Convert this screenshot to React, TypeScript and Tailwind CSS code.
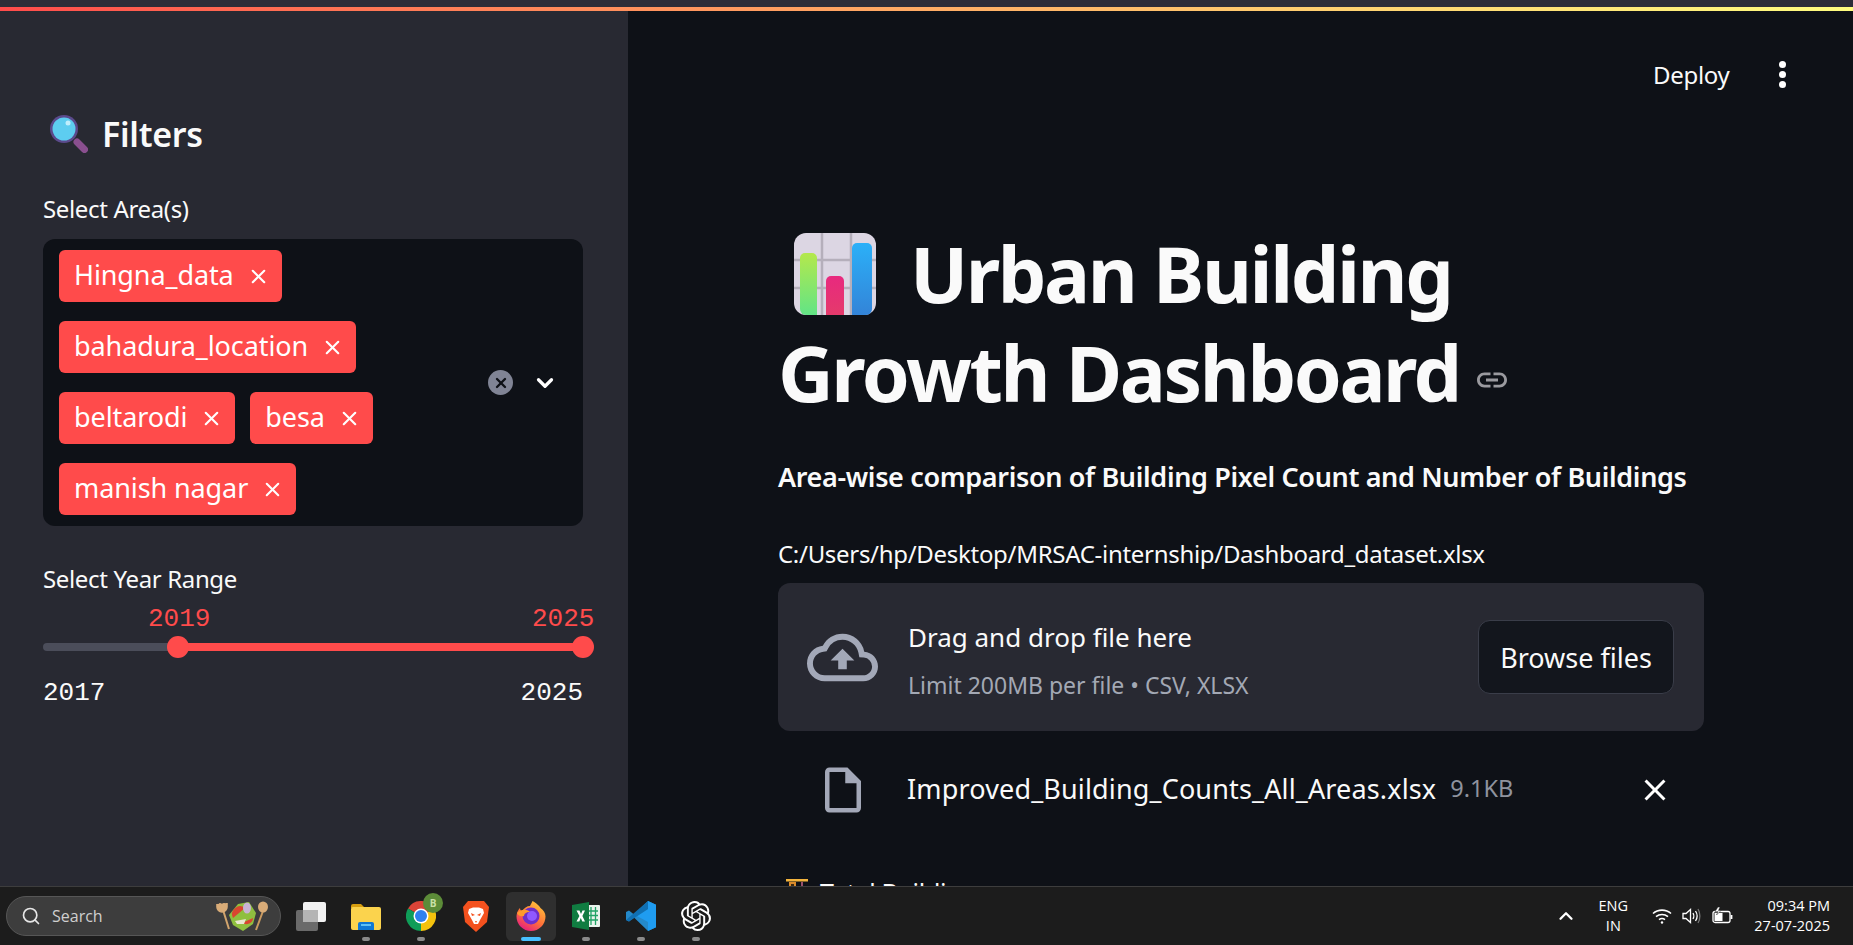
import { ChevronDown, ChevronUp, Search, X } from 'lucide-react';
import { MdClose, MdLink, MdOutlineCloudUpload, MdOutlineInsertDriveFile } from 'react-icons/md';
import { SiOpenai } from 'react-icons/si';

const areas = ['Hingna_data', 'bahadura_location', 'beltarodi', 'besa', 'manish nagar'];

const MagnifierEmoji = () => (
  <svg viewBox="0 0 38 38" className="h-[38px] w-[38px] shrink-0">
    <path d="M27 27L34.500 34.500" stroke="#8a4f8f" strokeWidth="7" strokeLinecap="round" />
    <circle cx="14" cy="14" r="14" fill="#5b4a8c" />
    <circle cx="14" cy="14" r="11.5" fill="#5dcdf0" />
    <circle cx="18" cy="8" r="2.5" fill="#bfeefc" />
  </svg>
);

const ChartEmoji = () => (
  <svg viewBox="0 0 82 82" className="h-[82px] w-[82px] shrink-0">
    <defs>
      <linearGradient id="g1" x1="0" y1="0" x2="0" y2="1">
        <stop offset="0" stopColor="#b4e84c" />
        <stop offset="1" stopColor="#62e486" />
      </linearGradient>
      <linearGradient id="g2" x1="0" y1="0" x2="0" y2="1">
        <stop offset="0" stopColor="#e8297f" />
        <stop offset="1" stopColor="#e53a6b" />
      </linearGradient>
      <linearGradient id="g3" x1="0" y1="0" x2="0" y2="1">
        <stop offset="0" stopColor="#2bb0f8" />
        <stop offset="1" stopColor="#3384d8" />
      </linearGradient>
    </defs>
    <rect width="82" height="82" rx="12" fill="#dcd6e3" />
    <path d="M28 0V82M57 0V82M0 27H82M0 55H82" stroke="#b5afbb" strokeWidth="2.5" />
    <path d="M6 76V25a5 5 0 0 1 5-5h7a5 5 0 0 1 5 5V82H12a6 6 0 0 1-6-6z" fill="url(#g1)" />
    <path d="M32 82V48a5 5 0 0 1 5-5h8a5 5 0 0 1 5 5V82z" fill="url(#g2)" />
    <path d="M58 82V15a5 5 0 0 1 5-5h10a5 5 0 0 1 5 5V76a6 6 0 0 1-6 6z" fill="url(#g3)" />
  </svg>
);

const SaladDoodle = () => (
  <svg viewBox="0 0 54 30" className="h-[30px] w-[54px]">
    <path d="M7 9L13 28" stroke="#d2a56d" strokeWidth="2" />
    <path d="M1 3V6a5 5 0 0 0 10 0V2M4 2V6M8 2V6" stroke="#d9ac78" strokeWidth="1.600" fill="#d9ac78" />
    <path d="M47 10L40 29" stroke="#c99a60" strokeWidth="2" />
    <ellipse cx="47" cy="6" rx="5" ry="5.500" fill="#d9ac78" />
    <path d="M13 14L22 3L33 1L40 12L37 23L27 30L17 24z" fill="#8fbf3f" />
    <path d="M17 17a8 8 0 0 1 12-10z" fill="#d9452f" />
    <path d="M26 22a7 6 0 0 0 11-5z" fill="#d9452f" />
    <ellipse cx="31" cy="7" rx="4" ry="5.500" fill="#c9b3d4" />
    <path d="M19 20L30 18L28 23L21 23z" fill="#e9e6d0" />
  </svg>
);

const CraneEmoji = () => (
  <svg viewBox="0 0 24 24" className="h-[24px] w-[24px] shrink-0">
    <rect x="1" y="0" width="22" height="2.500" fill="#f2b33d" />
    <rect x="4" y="3" width="7" height="21" fill="#d98a2b" />
    <rect x="6" y="5" width="3" height="3" fill="#3b2a12" />
    <path d="M17 3V8" stroke="#c7668a" strokeWidth="1.500" />
    <path d="M15 10H19" stroke="#8a8a8a" strokeWidth="2" />
  </svg>
);

const TaskView = () => (
  <svg viewBox="0 0 30 29" className="h-[29px] w-[30px]">
    <rect x="0" y="8" width="22" height="21" rx="2" fill="#6a6a6a" />
    <rect x="7" y="0" width="23" height="20" rx="2" fill="#f2f2f2" />
    <rect x="7" y="8" width="15" height="12" fill="#b4b4b4" />
  </svg>
);

const FolderIcon = () => (
  <svg viewBox="0 0 30 27" className="h-[27px] w-[30px]">
    <path d="M0 3a2 2 0 0 1 2-2h8l4 4H0z" fill="#d79e0f" />
    <rect x="0" y="4" width="30" height="23" rx="2" fill="#fbd34d" />
    <path d="M7 27v-6a2 2 0 0 1 2-2h12a2 2 0 0 1 2 2v6z" fill="#0f78d4" />
    <rect x="10" y="21" width="10" height="2" fill="#5fc1f5" />
  </svg>
);

const ChromeIcon = () => (
  <svg viewBox="0 0 30 30" className="h-[30px] w-[30px]">
    <path d="M15 15L2 7.5A15 15 0 0 1 28 7.5z" fill="#db4437" />
    <path d="M15 15L28 7.5A15 15 0 0 1 15 30z" fill="#f4c20d" />
    <path d="M15 15L15 30A15 15 0 0 1 2 7.5z" fill="#0f9d58" />
    <circle cx="15" cy="15" r="7.5" fill="#fff" />
    <circle cx="15" cy="15" r="6" fill="#2f80ed" />
  </svg>
);

const BraveIcon = () => (
  <svg viewBox="0 0 26 31" className="h-[31px] w-[26px]">
    <path d="M5 0H21L26 6L24 21L13 31L2 21L0 6z" fill="#f4511e" />
    <path d="M6 8L10 6.5H16L20 8L21 12L17 19L15 23H11L9 19L5 12z" fill="#fff" />
    <path d="M8 12L12 14L9 15zM18 12L14 14L17 15zM12 20H14L13 22z" fill="#f4511e" />
  </svg>
);

const FirefoxIcon = () => (
  <svg viewBox="0 0 30 30" className="h-[30px] w-[30px]">
    <defs>
      <linearGradient id="ff1" x1="0.8" y1="0" x2="0.2" y2="1">
        <stop offset="0" stopColor="#ffc93a" />
        <stop offset="0.55" stopColor="#ff7139" />
        <stop offset="1" stopColor="#e31587" />
      </linearGradient>
    </defs>
    <path d="M15 30A14.5 14.5 0 0 1 .5 15.5C.5 11 3 8 4 7c0 2 1 3 2 3 2-3 5-5 8-5C15 3 16 1 16.500 0c5 3 7 5 8 7 3 2 5 5 5 8.500A14.500 14.500 0 0 1 15 30z" fill="url(#ff1)" />
    <circle cx="15" cy="15" r="8.500" fill="#6e2fc9" />
    <circle cx="16" cy="15" r="5" fill="#9059ff" />
    <path d="M1 12C5 8 11 8 14 11C10 11 8 13 8 15C4 16 2 14 1 12z" fill="#ff9a2e" />
  </svg>
);

const ExcelIcon = () => (
  <svg viewBox="0 0 28 28" className="h-[28px] w-[28px]">
    <rect x="13" y="3" width="15" height="22" rx="1" fill="#e9f3ec" />
    <path d="M19 5V23M23.500 5V23M15 9H26M15 13.500H26M15 18H26" stroke="#21a366" strokeWidth="1.300" />
    <path d="M0 3L17 0V28L0 25z" fill="#107c41" />
    <path d="M4.500 8.500H7.500L9 12L10.500 8.500H13L10.400 14L13 19.500H10.300L8.800 16L7.300 19.500H4.500L7.400 14z" fill="#fff" />
  </svg>
);

const VsCodeIcon = () => (
  <svg viewBox="0 0 30 30" className="h-[30px] w-[30px]">
    <path d="M22 0L30 3.800V26.200L22 30L8 16.500L3 20.500L0 19V11L3 9.500L8 13.500z" fill="#2489ca" />
    <path d="M22 0L30 3.800V26.200L22 30V21L11 15L22 8z" fill="#1f9cf0" />
    <path d="M0 19L22 0V8L3 20.500z" fill="#1070b3" />
  </svg>
);

const WifiIcon = () => (
  <svg viewBox="0 0 20 16" className="h-4 w-5" fill="none" stroke="#fff" strokeWidth="1.600">
    <path d="M1 5.500C6 1 14 1 19 5.500M4 8.700C7.500 5.700 12.500 5.700 16 8.700M7 11.700C8.800 10.300 11.200 10.300 13 11.700" />
    <circle cx="10" cy="14.500" r="1.200" fill="#fff" stroke="none" />
  </svg>
);

const VolumeIcon = () => (
  <svg viewBox="0 0 20 16" className="h-4 w-5" fill="none" stroke="#fff" strokeWidth="1.300">
    <path d="M1 5.500H4L8.500 1.500V14.500L4 10.500H1z" />
    <path d="M11 5C12 6.500 12 9.500 11 11M13.500 3C15.500 6 15.500 10 13.500 13" />
    <path d="M16 1C18.500 5 18.500 11 16 15" stroke="#777" />
  </svg>
);

const BatteryIcon = () => (
  <svg viewBox="0 0 22 18" className="h-[18px] w-[22px]" fill="none" stroke="#fff" strokeWidth="1.300">
    <rect x="1" y="4.500" width="17" height="11" rx="2" />
    <rect x="2.500" y="6" width="8" height="8" fill="#fff" stroke="none" />
    <path d="M19.500 8V12" strokeWidth="1.800" />
    <path d="M6 0L3 4.500H6L4.500 8L9 3.500H6.500L8 0z" fill="#fff" stroke="#1c1c1c" strokeWidth="0.500" />
  </svg>
);

const TaskSlot = ({ children, dot, active }: { children: React.ReactNode; dot?: boolean; active?: boolean }) => (
  <div className="relative flex h-[59px] w-[55px] items-center justify-center">
    {active && <div className="absolute top-[5px] left-[2.500px] h-[49px] w-[50px] rounded-md bg-[#2f2f2f]" />}
    <div className="relative flex items-center justify-center">{children}</div>
    {dot && <div className="absolute top-[50px] left-[23.500px] h-[4px] w-[8px] rounded-full bg-[#8a8a8a]" />}
    {active && <div className="absolute top-[50px] left-[17.500px] h-[4px] w-[20px] rounded-full bg-[#47c0ff]" />}
  </div>
);

const Sidebar = () => (
  <aside className="flex w-[628px] shrink-0 flex-col bg-[#282932] pt-[103px] pr-[45px] pl-[43px]">
    <div className="flex h-[40px] items-center gap-[16px] pl-[7px]">
      <MagnifierEmoji />
      <h2 className="-ml-[2px] text-[34px] leading-none font-semibold tracking-[-0.3px] text-[#fafafa]">Filters</h2>
    </div>

    <label className="mt-[40px] h-[30px] text-[24px] leading-[30px] tracking-[-0.35px] text-[#fafafa]">Select Area(s)</label>
    <div className="mt-[15px] flex h-[287px] items-center rounded-[12px] bg-[#0e1117] pr-[25px] pl-[16px]">
      <div className="flex w-[421px] flex-wrap gap-x-[15px] gap-y-[19px]">
        {areas.map((area) => (
          <div key={area} className="flex h-[52px] items-center gap-[13px] rounded-[6px] bg-[#ff4b4b] pr-[12px] pl-[15px] text-white">
            <span className="-mt-[1px] text-[27px] tracking-[-0.1px]">{area}</span>
            <X className="h-[23px] w-[23px]" strokeWidth={2.2} />
          </div>
        ))}
      </div>
      <div className="ml-auto flex items-center gap-[19px]">
        <div className="flex h-[25px] w-[25px] items-center justify-center rounded-full bg-[#808495]">
          <X className="h-[16px] w-[16px] text-[#0e1117]" strokeWidth={3.5} />
        </div>
        <ChevronDown className="h-[26px] w-[26px] text-white" strokeWidth={3} />
      </div>
    </div>

    <label className="mt-[38px] h-[30px] text-[24px] leading-[30px] tracking-[-0.35px] text-[#fafafa]">Select Year Range</label>
    <div className="relative mt-[49px] h-[8px] w-[550px] rounded-full bg-[#4b4d5a]">
      <div className="absolute top-0 right-[10px] left-[135px] h-[8px] bg-[#ff4b4b]" />
      <div className="absolute top-[-7px] left-[124px] h-[22px] w-[22px] rounded-full bg-[#ff4b4b]" />
      <div className="absolute top-[-7px] left-[529px] h-[22px] w-[22px] rounded-full bg-[#ff4b4b]" />
      <span className="absolute top-[-38px] left-[105px] font-['Liberation_Mono',monospace] text-[26px] leading-[28px] text-[#ff4b4b]">2019</span>
      <span className="absolute top-[-38px] left-[489px] font-['Liberation_Mono',monospace] text-[26px] leading-[28px] text-[#ff4b4b]">2025</span>
    </div>
    <div className="mt-[28px] flex w-[540px] justify-between font-['Liberation_Mono',monospace] text-[26px] leading-[28px] text-[#fafafa]">
      <span>2017</span>
      <span>2025</span>
    </div>
  </aside>
);

const Main = () => (
  <main className="relative min-w-0 flex-1 overflow-hidden bg-[#0e1117] pt-[213px] pl-[150px]">
    <div className="absolute top-[50px] left-[1025px] flex h-[28px] items-center">
      <span className="text-[24px] tracking-[-0.3px] text-[#fafafa]">Deploy</span>
    </div>
    <div className="absolute top-[50px] left-[1151px] flex flex-col gap-[3px]">
      <div className="h-[7px] w-[7px] rounded-full bg-white" />
      <div className="h-[7px] w-[7px] rounded-full bg-white" />
      <div className="h-[7px] w-[7px] rounded-full bg-white" />
    </div>

    <div className="w-[926px]">
      <h1 className="text-[77px] leading-[99px] font-bold tracking-[-2.400px] text-[#fafafa]">
        <span className="flex items-center">
          <span className="ml-[16px]"><ChartEmoji /></span>
          <span className="ml-[34px]">Urban Building</span>
        </span>
        <span className="flex items-center">
          Growth Dashboard
          <MdLink className="mt-[14px] ml-[14px] h-[36px] w-[36px] text-[#9a9a9f]" />
        </span>
      </h1>

      <p className="mt-[37px] h-[36px] text-[27px] leading-[36px] font-semibold tracking-[-0.35px] whitespace-nowrap text-[#fafafa]">
        Area-wise comparison of Building Pixel Count and Number of Buildings
      </p>
      <p className="mt-[41px] h-[36px] text-[24px] leading-[36px] tracking-[-0.3px] whitespace-nowrap text-[#fafafa]">
        C:/Users/hp/Desktop/MRSAC-internship/Dashboard_dataset.xlsx
      </p>

      <div className="mt-[11px] flex h-[148px] items-center rounded-[12px] bg-[#282932] pr-[30px] pl-[29px]">
        <MdOutlineCloudUpload className="h-[71px] w-[71px] shrink-0 text-[#a3a8b8]" />
        <div className="ml-[30px] pt-[4px]">
          <div className="text-[26px] leading-[34px] text-[#fafafa]">Drag and drop file here</div>
          <div className="mt-[17px] text-[23px] leading-[28px] text-[#a3a8b4]">Limit 200MB per file • CSV, XLSX</div>
        </div>
        <button className="ml-auto flex h-[74px] w-[196px] items-center justify-center rounded-[12px] border border-[#3a3d49] bg-[#13161d] pt-[2px] text-[27px] text-[#fafafa]">
          Browse files
        </button>
      </div>

      <div className="mt-[32px] flex h-[54px] items-center pl-[38px]">
        <MdOutlineInsertDriveFile className="h-[54px] w-[54px] shrink-0 text-[#a3a8b8]" />
        <span className="-mt-[2px] ml-[37px] text-[27px] tracking-[0.15px] text-[#fafafa]">Improved_Building_Counts_All_Areas.xlsx</span>
        <span className="-mt-[2px] ml-[14px] text-[23.500px] text-[#8f939e]">9.1KB</span>
        <MdClose className="absolute left-[1009px] h-[36px] w-[36px] text-white" />
      </div>

      <div className="mt-[62px] flex items-start gap-[11px] pl-[7px] text-[25px] leading-[30px] tracking-[-0.3px] text-[#fafafa]">
        <CraneEmoji />
        <span className="-mt-[2px]">Total Buildings</span>
      </div>
    </div>
  </main>
);

const Taskbar = () => (
  <footer className="flex h-[59px] shrink-0 items-center border-t border-[#3d3d3d] bg-[#1c1c1c] text-white">
    <div className="ml-[6px] flex h-[40px] w-[275px] items-center rounded-full border border-[#565656] bg-[#3d3d3d] pr-[10px] pl-[14px]">
      <Search className="h-[20px] w-[20px] text-[#e6e6e6]" strokeWidth={2} />
      <span className="ml-[11px] font-['Open_Sans',sans-serif] text-[16px] text-[#cfcfcf]">Search</span>
      <div className="ml-auto"><SaladDoodle /></div>
    </div>
    <div className="ml-[2.500px] flex">
      <TaskSlot><TaskView /></TaskSlot>
      <TaskSlot dot><FolderIcon /></TaskSlot>
      <TaskSlot dot>
        <ChromeIcon />
        <div className="absolute top-[-8px] left-[17px] flex h-[20px] w-[20px] items-center justify-center rounded-full bg-[#5c8c38] font-['Open_Sans',sans-serif] text-[10px] font-bold text-[#c9e0a8]">B</div>
      </TaskSlot>
      <TaskSlot><BraveIcon /></TaskSlot>
      <TaskSlot active><FirefoxIcon /></TaskSlot>
      <TaskSlot dot><ExcelIcon /></TaskSlot>
      <TaskSlot dot><VsCodeIcon /></TaskSlot>
      <TaskSlot dot><SiOpenai className="h-[30px] w-[30px] text-white" /></TaskSlot>
    </div>

    <div className="ml-auto flex items-center pr-[23px] font-['Open_Sans',sans-serif] text-[14.500px] leading-[20px]">
      <ChevronUp className="h-[22px] w-[22px]" strokeWidth={2.500} />
      <div className="ml-[18px] flex w-[36px] flex-col items-center">
        <span>ENG</span>
        <span>IN</span>
      </div>
      <div className="ml-[21px]"><WifiIcon /></div>
      <div className="ml-[10px]"><VolumeIcon /></div>
      <div className="ml-[10px]"><BatteryIcon /></div>
      <div className="ml-[20px] flex flex-col items-end">
        <span>09:34 PM</span>
        <span>27-07-2025</span>
      </div>
    </div>
  </footer>
);

export default function App() {
  return (
    <div className="flex h-screen flex-col overflow-hidden bg-[#0e1117] font-['Noto_Sans',sans-serif]">
      <div className="h-[7px] shrink-0 bg-[#2d2d38]" />
      <div className="h-[4px] shrink-0 bg-linear-to-r from-[#ff4b4b] to-[#fffd80]" />
      <div className="flex min-h-0 flex-1">
        <Sidebar />
        <Main />
      </div>
      <Taskbar />
    </div>
  );
}
